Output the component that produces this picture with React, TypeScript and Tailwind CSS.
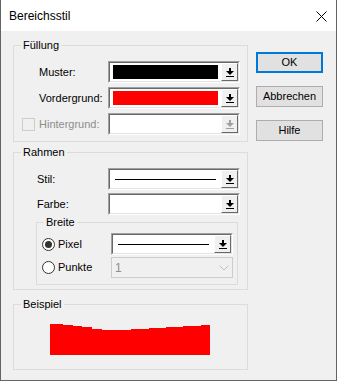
import type { ReactNode } from "react";

const font = { fontFamily: '"Liberation Sans", Arial, sans-serif' };

const DownArrow = ({ disabled }: { disabled?: boolean }) => (
  <svg width="8" height="9" viewBox="0 0 8 9" className="block">
    <g fill={disabled ? "#a0a0a0" : "#000"}>
      <rect x="3" y="0" width="2" height="3" />
      <polygon points="0,3 8,3 4,7" />
      <rect x="0" y="8" width="8" height="1" />
    </g>
  </svg>
);

// sunken combo with the classic little arrow button
const Combo = ({
  w,
  h = "h-[22px]",
  children,
  disabled,
}: {
  w: string;
  h?: string;
  children?: ReactNode;
  disabled?: boolean;
}) => (
  <div className={`${w} ${h} flex border-t border-l border-[#a0a0a0] border-r border-r-white border-b border-b-white`}>
    <div className="flex-1 flex border-t border-l border-[#696969] border-r border-r-[#e3e3e3] border-b border-b-[#e3e3e3] bg-white">
      <div className="flex-1 flex items-center px-[3px]">{children}</div>
      <div className="w-[17px] flex items-center justify-center bg-[#f0f0f0] border-t border-l border-white border-r border-r-[#696969] border-b border-b-[#696969]">
        <DownArrow disabled={disabled} />
      </div>
    </div>
  </div>
);

const Group = ({
  title,
  className,
  children,
}: {
  title: string;
  className: string;
  children: ReactNode;
}) => (
  <div className={`relative border border-[#dcdcdc] ${className}`}>
    <span className="absolute -top-[8px] left-[7px] px-[2px] bg-[#f0f0f0] text-[11px] leading-[14px] text-black">
      {title}
    </span>
    {children}
  </div>
);

const Radio = ({ checked }: { checked?: boolean }) => (
  <div className="w-[13px] h-[13px] rounded-full border border-[#333] bg-white flex items-center justify-center">
    {checked && <div className="w-[7px] h-[7px] rounded-full bg-[#333]" />}
  </div>
);

const Button = ({ label, primary }: { label: string; primary?: boolean }) => (
  <div
    className={`w-[67px] h-[21px] flex items-center justify-center bg-[#e1e1e1] text-[11px] text-black ${
      primary ? "border-2 border-[#0078d7]" : "border border-[#adadad]"
    }`}
  >
    {label}
  </div>
);

export default function App() {
  return (
    <div
      style={font}
      className="w-[337px] h-[381px] flex flex-col bg-[#f0f0f0] border-x border-b border-[#646464] text-black overflow-hidden"
    >
      {/* Title bar */}
      <div className="h-[31px] shrink-0 bg-white flex items-center justify-between pl-[8px] pr-[9px]">
        <span className="text-[12px]">Bereichsstil</span>
        <svg width="11" height="11" viewBox="0 0 11 11" className="mt-[1px]">
          <path d="M0.5 0.5 L10.5 10.5 M10.5 0.5 L0.5 10.5" stroke="#000" strokeWidth="1" />
        </svg>
      </div>

      <div className="flex pl-[12px]">
        {/* Left column */}
        <div className="w-[235px] flex flex-col">
          <Group title="Füllung" className="mt-[14px] pt-[15px] pb-[6px]">
            <div className="flex flex-col gap-[4px] text-[11px]">
              <div className="flex items-center pl-[25px]">
                <span className="w-[69px]">Muster:</span>
                <Combo w="w-[132px]">
                  <div className="flex-1 h-[14px] bg-black" />
                </Combo>
              </div>
              <div className="flex items-center pl-[25px]">
                <span className="w-[69px]">Vordergrund:</span>
                <Combo w="w-[132px]">
                  <div className="flex-1 h-[14px] bg-[#ff0000]" />
                </Combo>
              </div>
              <div className="flex items-center pl-[8px]">
                <div className="w-[13px] h-[13px] border border-[#cccccc] bg-[#f0f0f0] mr-[4px]" />
                <span className="w-[69px] text-[#8d8d8d]">Hintergrund:</span>
                <Combo w="w-[132px]" disabled />
              </div>
            </div>
          </Group>

          <Group title="Rahmen" className="mt-[10px] pt-[15px] pb-[4px]">
            <div className="flex flex-col gap-[3px] text-[11px]">
              <div className="flex items-center pl-[23px]">
                <span className="w-[71px]">Stil:</span>
                <Combo w="w-[132px]">
                  <div className="flex-1 h-px bg-black mx-[2px]" />
                </Combo>
              </div>
              <div className="flex items-center pl-[23px]">
                <span className="w-[71px]">Farbe:</span>
                <Combo w="w-[132px]" />
              </div>
            </div>
            <Group title="Breite" className="ml-[22px] w-[202px] mt-[7px] pt-[10px] pb-[6px]">
              <div className="flex flex-col gap-[2px] text-[11px]">
                <div className="flex items-center pl-[5px]">
                  <Radio checked />
                  <span className="w-[56px] pl-[3px]">Pixel</span>
                  <Combo w="w-[122px]">
                    <div className="flex-1 h-px bg-black mx-[2px]" />
                  </Combo>
                </div>
                <div className="flex items-center pl-[5px]">
                  <Radio />
                  <span className="w-[56px] pl-[3px]">Punkte</span>
                  <div className="w-[122px] h-[21px] flex items-center border border-[#cccccc] bg-[#f0f0f0] pl-[3px] pr-[3px]">
                    <span className="flex-1 text-[#8d8d8d] text-[12px]">1</span>
                    <svg width="10" height="6" viewBox="0 0 10 6">
                      <path d="M0.5 0.5 L5 5 L9.5 0.5" fill="none" stroke="#bfbfbf" strokeWidth="1" />
                    </svg>
                  </div>
                </div>
              </div>
            </Group>
          </Group>

          <Group title="Beispiel" className="mt-[14px] pt-[19px] pb-[14px]">
            <svg width="160" height="31" viewBox="0 0 160 31" className="block ml-[36px]">
              <polygon
                points="0,0 13,0 13,1 23,1 23,2 32,2 32,3 42,3 42,5 52,5 52,6 81,6 81,5 99,5 99,4 116,4 116,3 133,3 133,2 151,2 151,1 160,1 160,0 160,31 0,31"
                fill="#ff0000"
              />
            </svg>
          </Group>
        </div>

        {/* Right column */}
        <div className="flex flex-col ml-[8px] pt-[21px] gap-[13px]">
          <Button label="OK" primary />
          <Button label="Abbrechen" />
          <Button label="Hilfe" />
        </div>
      </div>
    </div>
  );
}
